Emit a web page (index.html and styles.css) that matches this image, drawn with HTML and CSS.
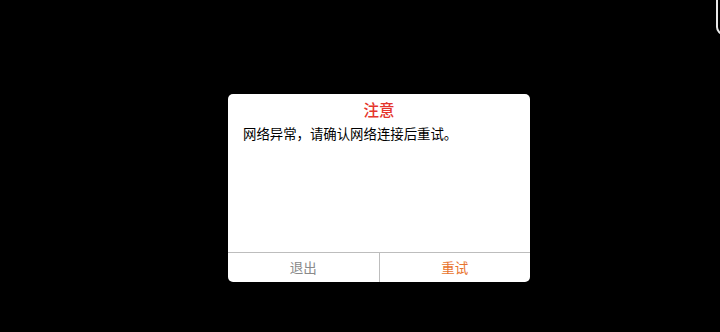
FILE: index.html
```html
<!DOCTYPE html>
<html lang="zh-CN">
<head>
  <meta charset="UTF-8">
  <meta name="viewport" content="width=device-width, initial-scale=1.0">
  <title>注意</title>
  <link rel="stylesheet" href="styles.css">
</head>
<body>
  <!-- 右上角的边框 -->
  <div class="corner-frame"></div>

  <!-- 对话框 -->
  <div class="dialog">
    <p class="dialog-title">注意</p>
    <p class="dialog-message">网络异常，请确认网络连接后重试。</p>
    <div class="dialog-footer">
      <div class="dialog-btn btn-cancel">退出</div>
      <div class="dialog-btn btn-retry">重试</div>
    </div>
  </div>
</body>
</html>
```

FILE: styles.css
```css
body {
  font-family: "Noto Sans CJK SC", "Noto Sans", sans-serif;
  margin: 0;
  padding: 0;
  background-color: #000;
  width: 720px;
  height: 332px;
  overflow: hidden;
  position: relative;
}

.corner-frame {
  position: absolute;
  top: -12px;
  left: 716px;
  width: 20px;
  height: 43px;
  border: 2px solid #e8e8e8;
  border-radius: 8px;
}

/* 对话框 */
.dialog {
  margin: 94px 0 0 228px;
  width: 302px;
  height: 188px;
  background-color: #fff;
  border-radius: 5px;
  display: flex;
  flex-direction: column;
  overflow: hidden;
}

.dialog-title {
  margin: 0;
  padding-top: 5px;
  line-height: 20px;
  font-size: 15.5px;
  font-weight: 500;
  color: #e5352c;
  text-align: center;
}

.dialog-message {
  flex: 1;
  margin: 0;
  padding: 4px 15px 0;
  line-height: 20px;
  font-size: 13.4px;
  color: #000;
}

.dialog-footer {
  display: flex;
  border-top: 1px solid #bdbdbd;
  height: 29px;
}

.dialog-btn {
  flex: 1;
  text-align: center;
  line-height: 29px;
  font-size: 13.5px;
}

.btn-cancel {
  color: #8a8a8a;
  border-right: 1px solid #bdbdbd;
}

.btn-retry {
  color: #e8742e;
}
```
